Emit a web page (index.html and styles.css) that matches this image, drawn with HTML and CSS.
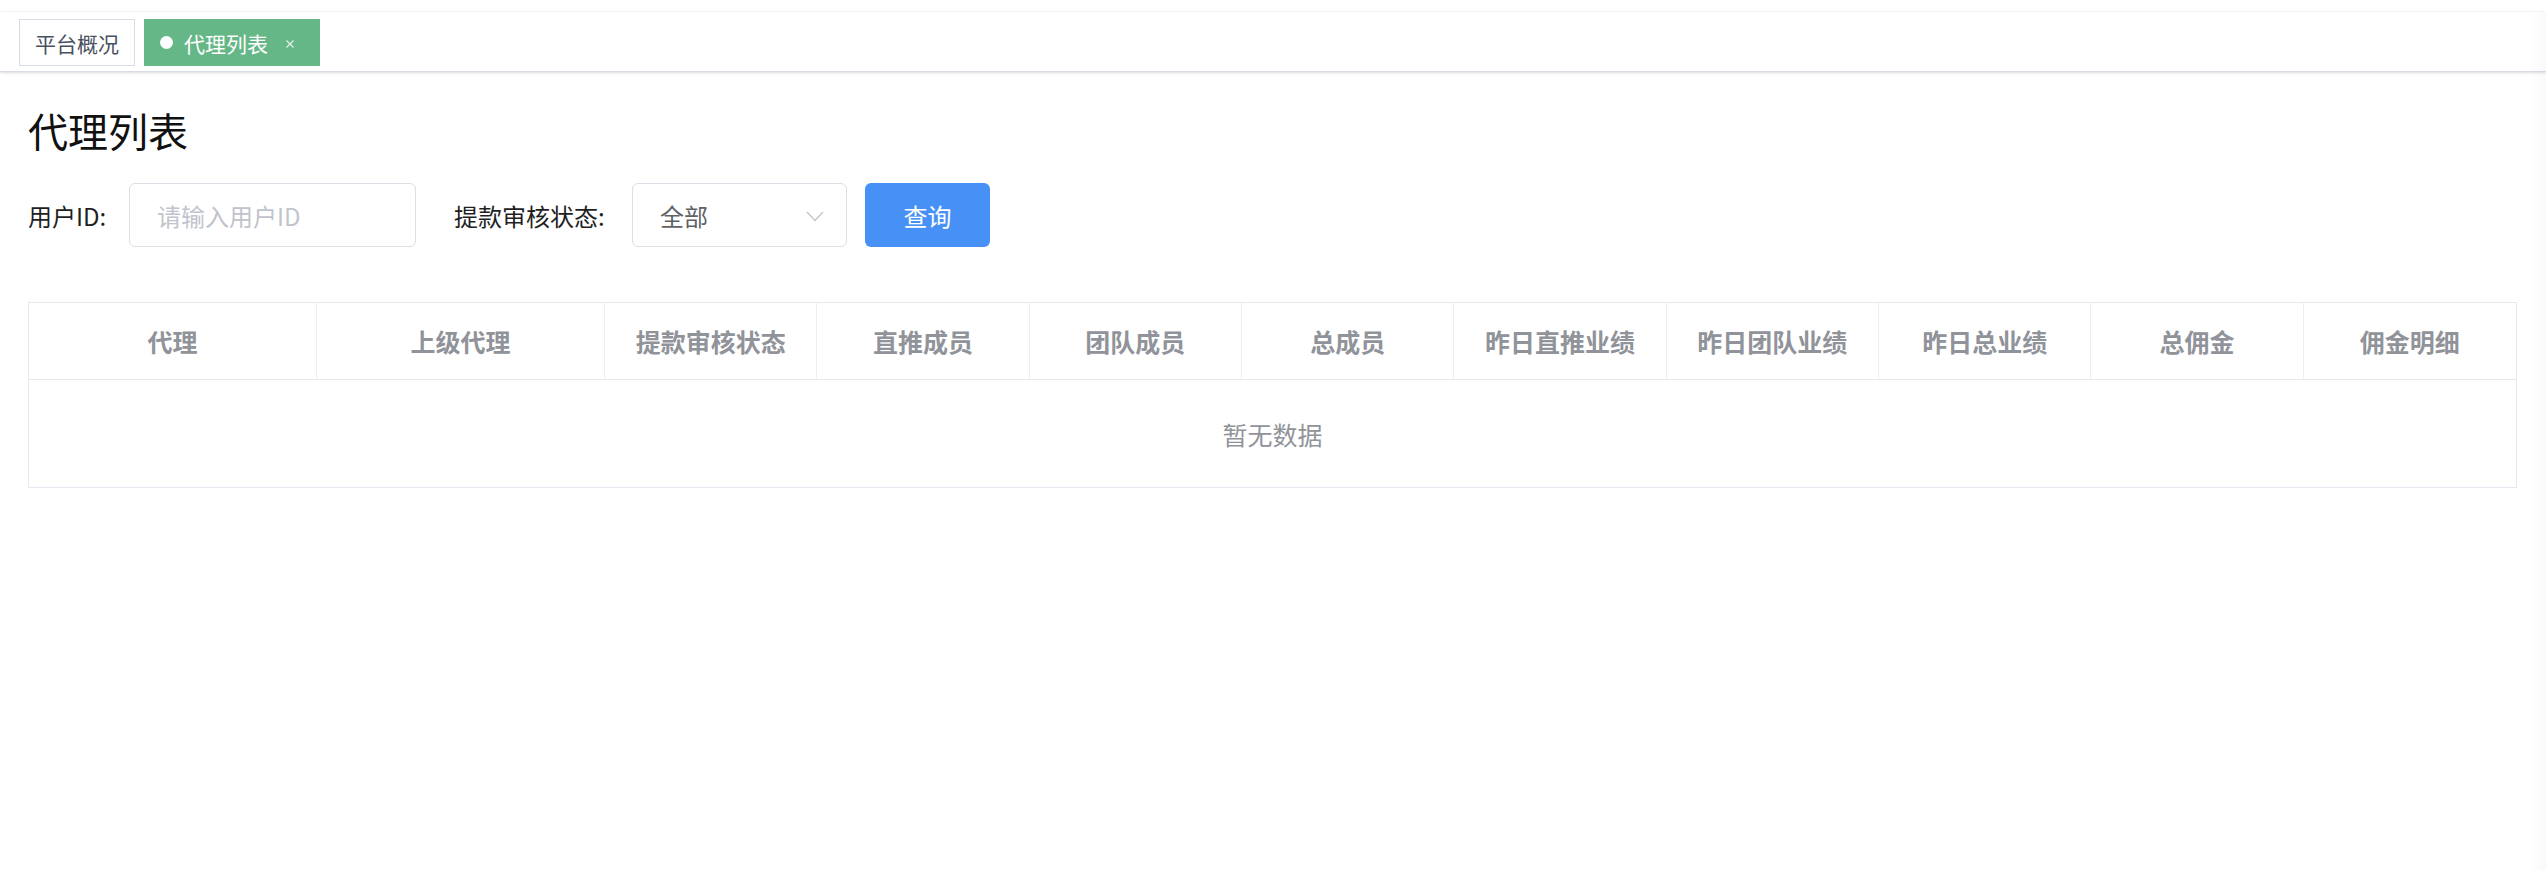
FILE: index.html
```html
<!DOCTYPE html>
<html lang="zh-CN">
<head>
<meta charset="utf-8">
<title>代理列表</title>
<link rel="stylesheet" href="styles.css">
</head>
<body>
<div class="top-strip"></div>
<div class="tags-bar">
  <span class="tag">平台概况</span>
  <span class="tag tag-active"><span class="tag-dot"></span>代理列表<svg class="tag-close" viewBox="0 0 8 8" width="8" height="8"><path d="M0.5 0.5L7.5 7.5M7.5 0.5L0.5 7.5" stroke="#e6f3eb" stroke-width="1.1" fill="none"/></svg></span>
</div>
<div class="main">
  <h1 class="title">代理列表</h1>
  <form class="search-form">
    <label class="form-label label-user">用户ID:</label>
    <div class="input-box"><span class="placeholder">请输入用户ID</span></div>
    <label class="form-label label-status">提款审核状态:</label>
    <div class="select-box">
      <span class="select-value">全部</span>
      <svg class="select-arrow" viewBox="0 0 18 11" width="18" height="11"><path d="M1 1L9 9.5L17 1" stroke="#c0c4cc" stroke-width="1.3" fill="none"/></svg>
    </div>
    <button type="button" class="btn-primary">查询</button>
  </form>
  <div class="table">
    <div class="thead">
      <div class="th">代理</div>
      <div class="th">上级代理</div>
      <div class="th">提款审核状态</div>
      <div class="th">直推成员</div>
      <div class="th">团队成员</div>
      <div class="th">总成员</div>
      <div class="th">昨日直推业绩</div>
      <div class="th">昨日团队业绩</div>
      <div class="th">昨日总业绩</div>
      <div class="th">总佣金</div>
      <div class="th th-last">佣金明细</div>
    </div>
    <div class="tbody-empty">暂无数据</div>
  </div>
</div>
<div class="scroll-track"></div>
</body>
</html>
```

FILE: styles.css
```css
* { box-sizing: border-box; }
html, body {
  margin: 0;
  padding: 0;
  background: #fff;
  font-family: "Noto Sans CJK SC", "Noto Sans", sans-serif;
  color: #1f1f1f;
}
.top-strip { height: 12px; background: #fff; }
.tags-bar {
  height: 60px;
  background: #fff;
  border-bottom: 1px solid #d8dce5;
  box-shadow: 0 1px 3px 0 rgba(0, 0, 0, 0.12), 0 0 3px 0 rgba(0, 0, 0, 0.05);
  padding: 7px 0 0 19px;
  display: flex;
  align-items: flex-start;
  gap: 9px;
  position: relative;
}
.tag {
  height: 47px;
  display: inline-flex;
  align-items: center;
  border: 1px solid #d8dce5;
  background: #fff;
  color: #495060;
  font-size: 21px;
  padding: 0 15px 0 15px;
  white-space: nowrap;
}
.tag-active {
  background: #66b787;
  border-color: #66b787;
  color: #fff;
  padding: 0 25px 0 15px;
}
.tag-dot {
  width: 13px;
  height: 13px;
  border-radius: 50%;
  background: #fff;
  margin-right: 11px;
}
.tag-close { margin-left: 18px; margin-top: 2px; }
.main { padding: 38px 29px 0 28px; }
.title {
  margin: 0;
  font-size: 40px;
  line-height: 40px;
  font-weight: 400;
  color: #111;
}
.search-form {
  margin-top: 33px;
  display: flex;
  align-items: center;
  height: 64px;
}
.form-label {
  font-size: 24px;
  color: #1f1f1f;
  white-space: nowrap;
}
.label-user { width: 101px; }
.label-status { width: 178px; margin-left: 38px; }
.input-box {
  width: 287px;
  height: 64px;
  border: 1px solid #dcdfe6;
  border-radius: 6px;
  display: flex;
  align-items: center;
  padding-left: 27px;
}
.placeholder { font-size: 24px; color: #c0c4cc; }
.select-box {
  width: 215px;
  height: 64px;
  border: 1px solid #dcdfe6;
  border-radius: 6px;
  display: flex;
  align-items: center;
  justify-content: space-between;
  padding: 0 22px 0 27px;
}
.select-value { font-size: 24px; color: #606266; }
.select-arrow { margin-top: 2px; }
.btn-primary {
  margin-left: 18px;
  width: 125px;
  height: 64px;
  border: none;
  border-radius: 6px;
  background: #4791f6;
  color: #fff;
  font-family: inherit;
  font-size: 24px;
  padding: 0;
}
.table {
  margin-top: 55px;
  border: 1px solid #e6e9f0;
}
.thead {
  display: grid;
  grid-template-columns: 288px 288px repeat(9, 1fr);
  height: 77px;
  border-bottom: 1px solid #e6e9f0;
}
.th {
  display: flex;
  align-items: center;
  justify-content: center;
  border-right: 1px solid #ebeef5;
  font-size: 25px;
  font-weight: 700;
  color: #909399;
  white-space: nowrap;
}
.th-last { border-right: none; }
.tbody-empty {
  height: 107px;
  display: flex;
  align-items: center;
  justify-content: center;
  font-size: 25px;
  color: #909399;
}
.scroll-track {
  position: fixed;
  top: 12px;
  right: 0;
  bottom: 0;
  width: 16px;
  background: linear-gradient(to right, rgba(0, 0, 0, 0), rgba(0, 0, 0, 0.025));
  pointer-events: none;
}
```
